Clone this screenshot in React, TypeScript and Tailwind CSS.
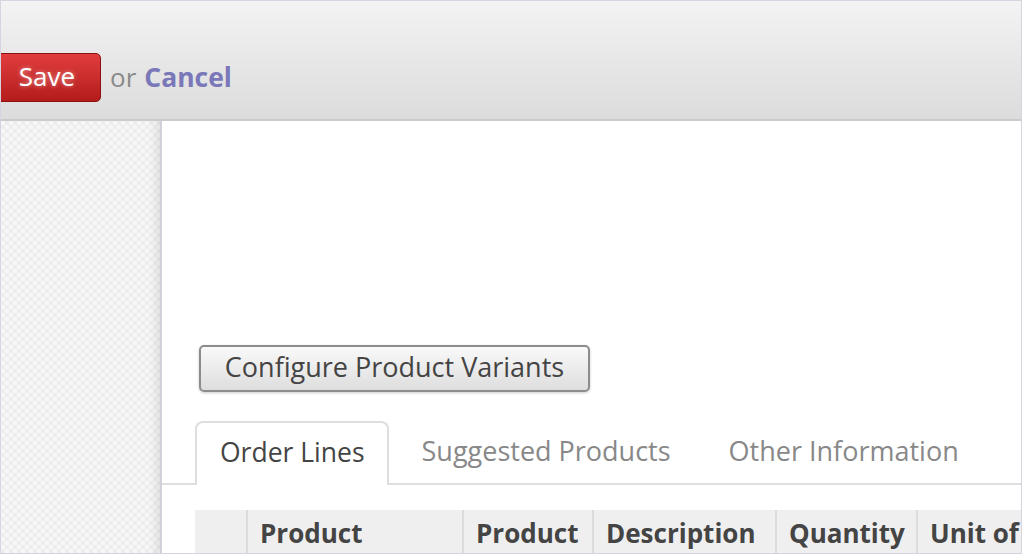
import React from "react";

const font = { fontFamily: '"Open Sans", "Liberation Sans", sans-serif' };

function SaveBar() {
  return (
    <header className="h-[120px] shrink-0 border-b-2 border-[#cbcbcb] bg-gradient-to-b from-[#f3f3f4] to-[#dcdcdc] pt-[52px]">
      <div className="flex items-center">
        <button className="-ml-[8px] flex h-[49px] w-[108px] items-center justify-center rounded-[5px] border border-[#8a1212] bg-gradient-to-b from-[#e03d3d] to-[#b41b1b] pb-[2px] text-[26px] text-white [text-shadow:0_0_4px_rgba(255,255,255,0.5)]">
          Save
        </button>
        <span className="ml-[9px] text-[26px] text-[#8a8a8a]">or</span>
        <a className="ml-[8px] text-[26.5px] font-bold text-[#7a78b8]">Cancel</a>
      </div>
    </header>
  );
}

function Tabs() {
  const tabs = ["Order Lines", "Suggested Products", "Other Information"];
  return (
    <div className="flex h-[64px] items-end border-b-2 border-[#dedede] pl-[33px]">
      {tabs.map((t, i) =>
        i === 0 ? (
          <div key={t} className="-mb-[2px] flex h-[64px] items-center rounded-t-[8px] border-2 border-b-0 border-[#dedede] bg-white pl-[23px] pr-[22px] pb-[2px] text-[26.5px] text-[#444]">
            {t}
          </div>
        ) : (
          <div key={t} className="flex h-[62px] items-center pl-[33px] pr-[25px] pb-[2px] text-[27px] text-[#888]">
            {t}
          </div>
        )
      )}
    </div>
  );
}

function TableHead() {
  const cols: [string, number][] = [
    ["", 53],
    ["Product", 216],
    ["Product", 130],
    ["Description", 183],
    ["Quantity", 141],
    ["Unit of", 120],
  ];
  return (
    <div className="ml-[33px] mt-[25px] flex h-[60px] bg-[#efefef]">
      {cols.map(([c, w], i) => (
        <div
          key={i}
          style={{ width: w }}
          className="shrink-0 border-r-2 border-[#dcdcdc] pl-[12px] pt-[4px] text-[26px] font-bold text-[#444]"
        >
          {c}
        </div>
      ))}
    </div>
  );
}

export default function App() {
  return (
    <div style={font} className="flex h-[554px] w-[1022px] flex-col overflow-hidden border border-[#d6d5df] bg-white">
      <SaveBar />
      <div className="flex min-h-0 flex-1">
        <aside className="w-[161px] shrink-0 border-r-2 border-[#d2d1db] bg-[conic-gradient(#ededed_25%,#f7f7f7_0_50%,#ededed_0_75%,#f7f7f7_0)] bg-[length:8px_8px] shadow-[inset_-10px_0_8px_-6px_rgba(0,0,0,0.09)]" />
        <main className="min-w-0 flex-1 overflow-hidden">
          <div className="pl-[37px] pt-[224px]">
            <button className="h-[47px] w-[391px] rounded-[5px] border-2 border-[#8c8c8c] bg-gradient-to-b from-[#f9f9f9] to-[#dedede] pb-[2px] text-[27px] text-[#444] shadow-[0_1px_3px_rgba(0,0,0,0.2)]">
              Configure Product Variants
            </button>
          </div>
          <div className="mt-[29px]">
            <Tabs />
          </div>
          <TableHead />
        </main>
      </div>
    </div>
  );
}
